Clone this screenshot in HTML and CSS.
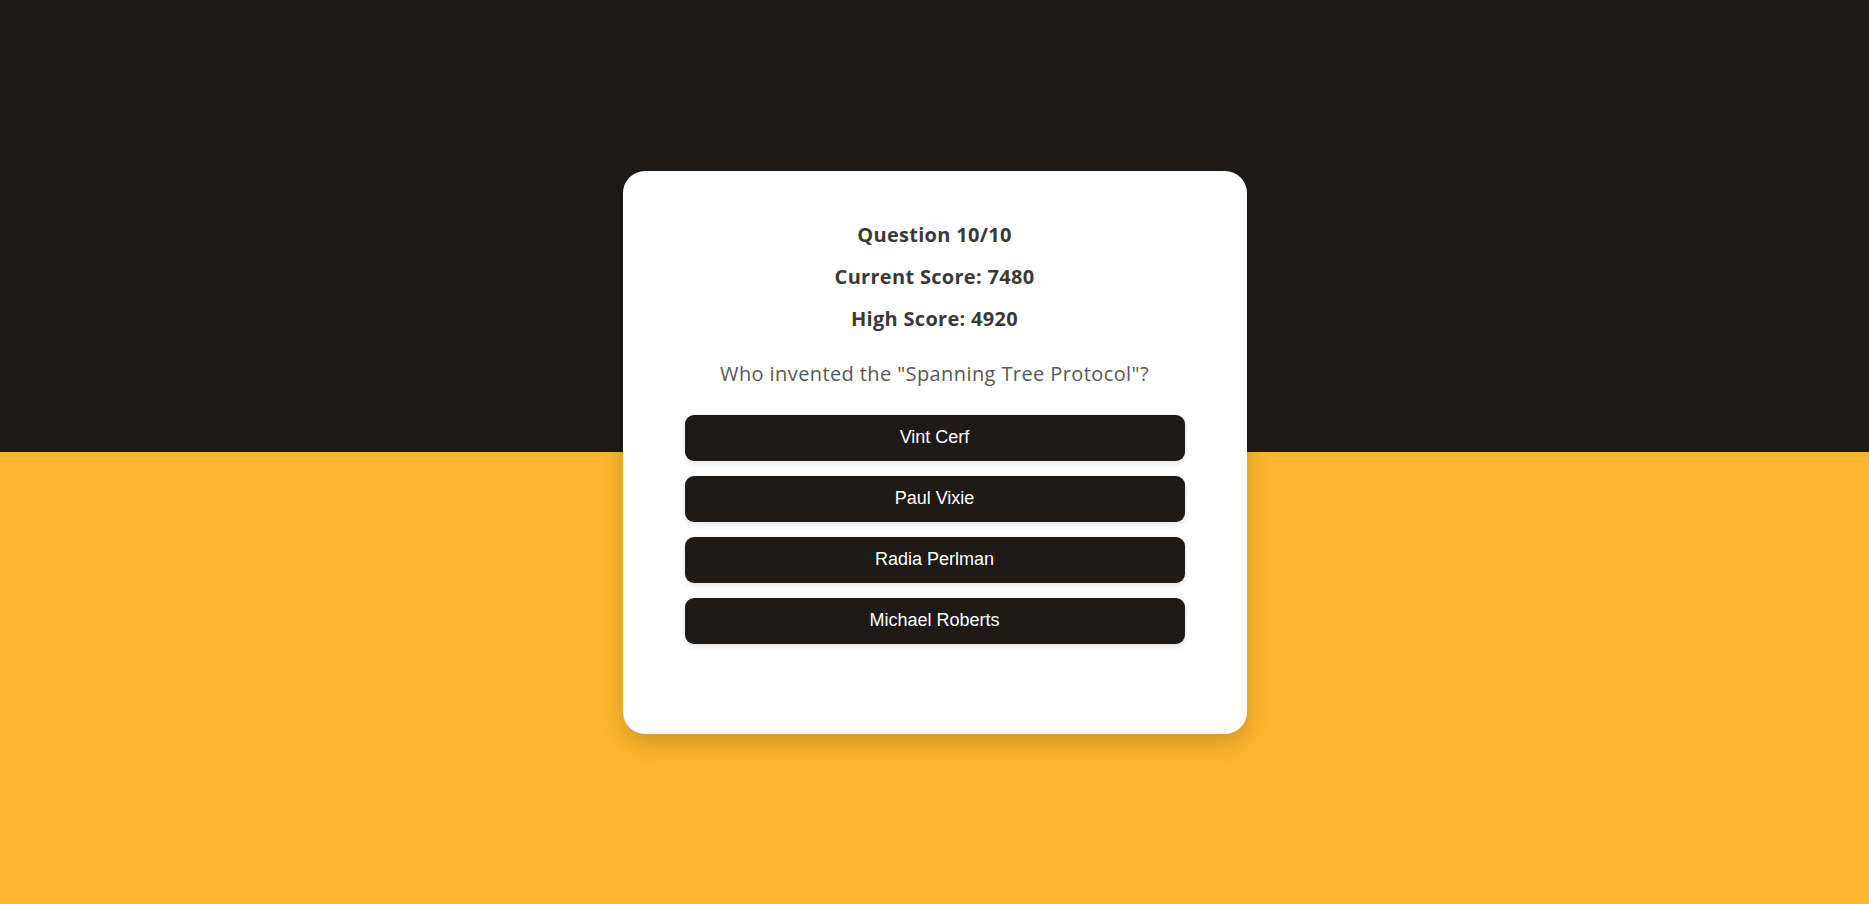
FILE: index.html
```html
<!DOCTYPE html>
<html lang="en">
<head>
<meta charset="utf-8">
<title>Quiz</title>
<link rel="stylesheet" href="styles.css">
</head>
<body>
<main class="page">
  <section class="card">
    <div class="stats">
      <p class="stat">Question 10/10</p>
      <p class="stat">Current Score: 7480</p>
      <p class="stat">High Score: 4920</p>
    </div>
    <p class="question">Who invented the "Spanning Tree Protocol"?</p>
    <div class="answers">
      <button class="answer">Vint Cerf</button>
      <button class="answer">Paul Vixie</button>
      <button class="answer">Radia Perlman</button>
      <button class="answer">Michael Roberts</button>
    </div>
  </section>
</main>
</body>
</html>
```
FILE: styles.css
```css
* { box-sizing: border-box; }
html, body { margin: 0; padding: 0; height: 100%; }
body {
  background: linear-gradient(to bottom, #1e1a17 0, #1e1a17 50%, #feb72c 50%, #feb72c 100%);
  font-family: "Open Sans", "Liberation Sans", sans-serif;
}
.page {
  height: 100%;
  display: flex;
  align-items: center;
  justify-content: center;
}
.card {
  width: 624px;
  height: 563px;
  background: #ffffff;
  border-radius: 22px;
  padding: 43px 62px 0;
  box-shadow: 0 10px 24px rgba(0, 0, 0, 0.18);
  display: flex;
  flex-direction: column;
  align-items: center;
}
.stats { display: flex; flex-direction: column; align-items: center; }
.stat {
  margin: 0;
  line-height: 42px;
  font-size: 20px;
  font-weight: 700;
  letter-spacing: 0.3px;
  color: #3b3937;
}
.question {
  margin: 19px 0 0;
  line-height: 30px;
  font-size: 20px;
  font-weight: 400;
  letter-spacing: 0.4px;
  color: #5a5756;
}
.answers {
  margin-top: 26px;
  width: 100%;
  display: flex;
  flex-direction: column;
  gap: 15px;
}
.answer {
  height: 46px;
  width: 100%;
  border: none;
  border-radius: 9px;
  background: #1e1a17;
  color: #ffffff;
  font-family: "Liberation Sans", Arial, sans-serif;
  font-size: 18px;
  box-shadow: 0 2px 6px rgba(0, 0, 0, 0.12);
  cursor: pointer;
}
```
